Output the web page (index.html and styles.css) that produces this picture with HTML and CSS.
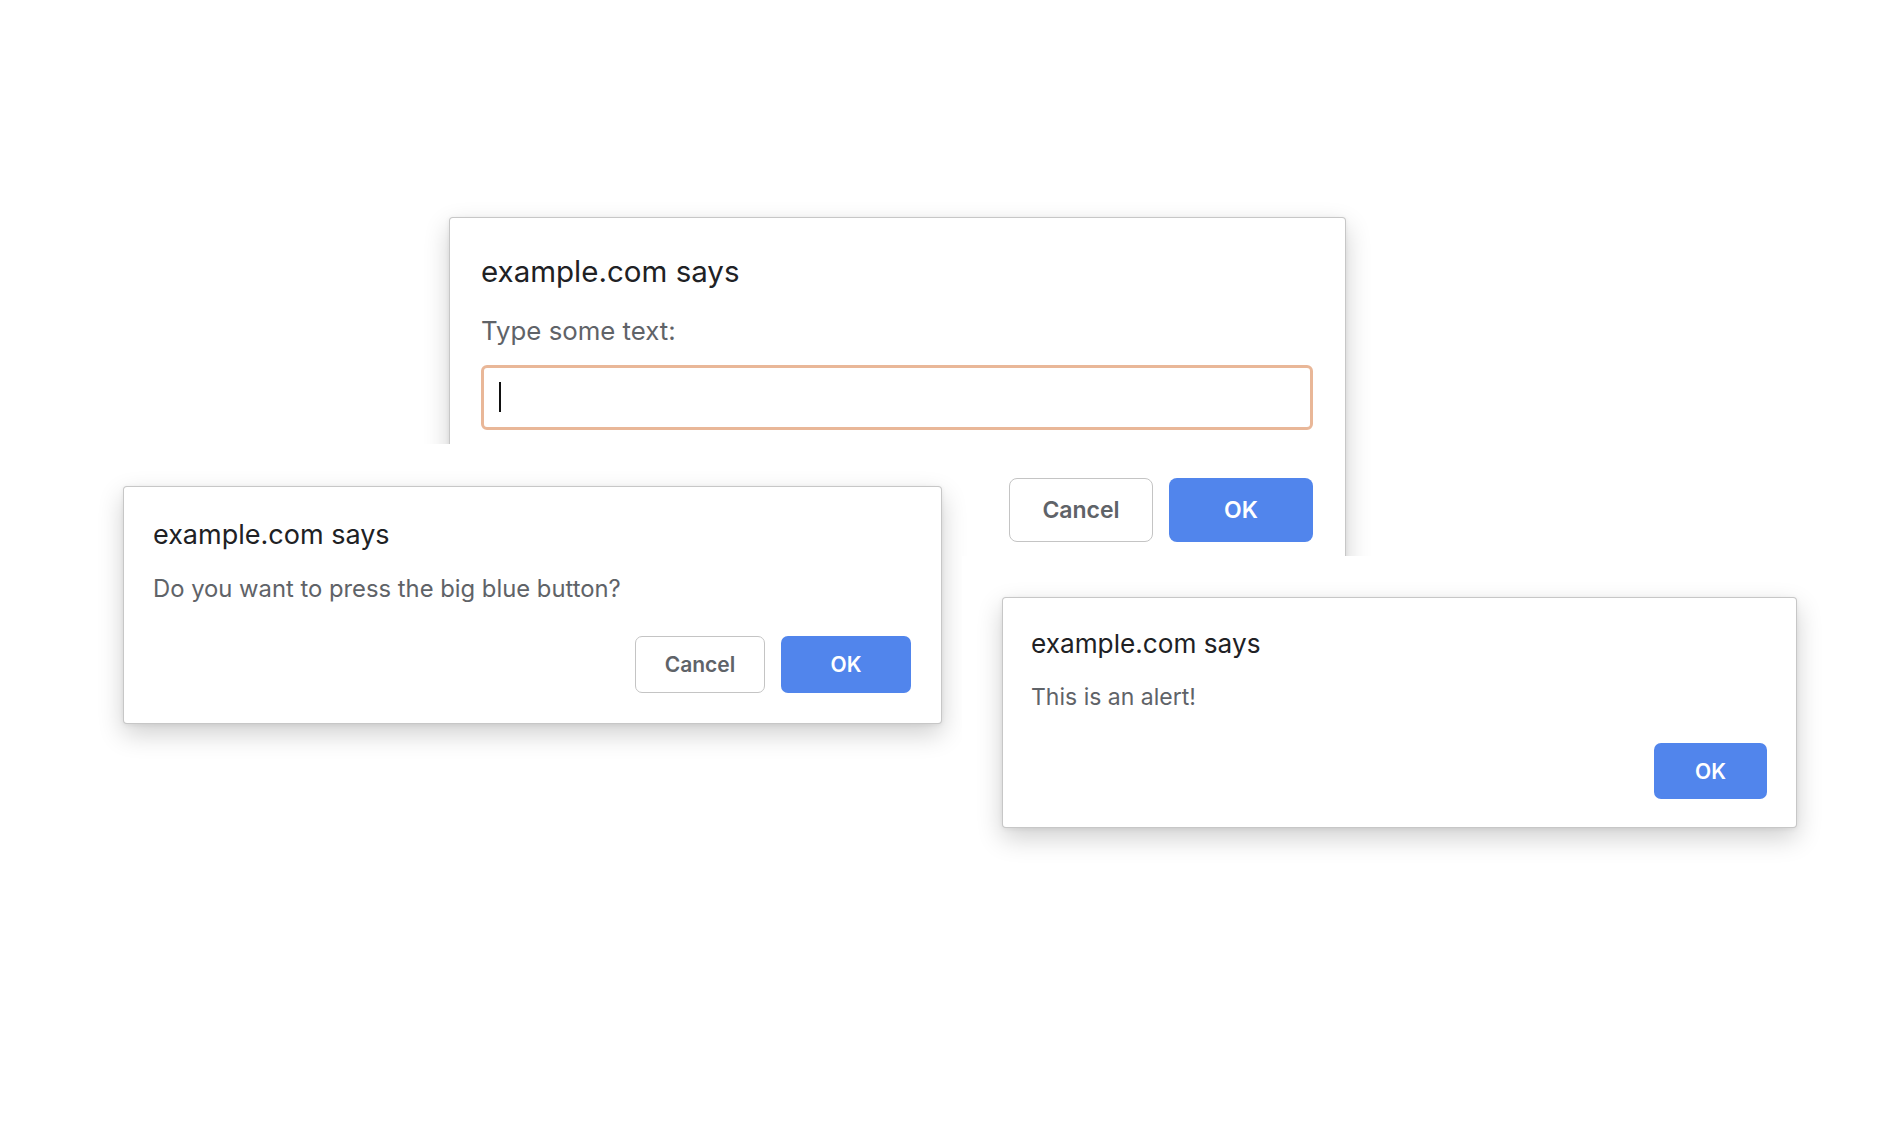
FILE: index.html
```html
<!DOCTYPE html>
<html lang="en">
<head>
<meta charset="utf-8">
<title>Dialogs</title>
<link rel="stylesheet" href="styles.css">
</head>
<body>
<div class="canvas">
  <div class="shot shot-prompt">
    <div class="dialog dialog-prompt">
      <div class="title">example.com says</div>
      <div class="message">Type some text:</div>
      <div class="field"><span class="caret"></span></div>
      <div class="actions">
        <button class="btn btn-cancel">Cancel</button>
        <button class="btn btn-ok">OK</button>
      </div>
    </div>
  </div>

  <div class="shot shot-confirm">
    <div class="dialog dialog-confirm">
      <div class="title">example.com says</div>
      <div class="message">Do you want to press the big blue button?</div>
      <div class="actions">
        <button class="btn btn-cancel">Cancel</button>
        <button class="btn btn-ok">OK</button>
      </div>
    </div>
  </div>

  <div class="shot shot-alert">
    <div class="dialog dialog-alert">
      <div class="title">example.com says</div>
      <div class="message">This is an alert!</div>
      <div class="actions">
        <button class="btn btn-ok">OK</button>
      </div>
    </div>
  </div>
</div>
</body>
</html>
```

FILE: styles.css
```css
html, body {
  margin: 0;
  padding: 0;
  background: #ffffff;
}

body {
  font-family: "Inter", "Liberation Sans", "DejaVu Sans", sans-serif;
}

.canvas {
  position: relative;
  width: 1884px;
  height: 1122px;
  overflow: hidden;
  background: #ffffff;
}

/* each "screenshot" is an opaque white tile holding one dialog */
.shot {
  position: absolute;
  background: #ffffff;
  padding: 42px;
  overflow: hidden;
}

.shot-prompt {
  left: 407px;
  top: 175px;
  z-index: 1;
}

.shot-confirm {
  left: 81px;
  top: 444px;
  z-index: 2;
}

.shot-alert {
  left: 962px;
  top: 556px;
  padding: 41px 40px 36px 40px;
  z-index: 3;
}

.dialog {
  box-sizing: border-box;
  display: flex;
  flex-direction: column;
  background: #ffffff;
  border: 1px solid rgba(0, 0, 0, 0.22);
  border-radius: 4px;
  box-shadow: 0 10px 26px rgba(0, 0, 0, 0.19), 0 1px 5px rgba(0, 0, 0, 0.07);
}

.title {
  color: #202124;
  white-space: nowrap;
}

.message {
  color: #5f6368;
  white-space: nowrap;
}

.actions {
  display: flex;
  justify-content: flex-end;
  gap: 16px;
}

.btn {
  box-sizing: border-box;
  display: flex;
  align-items: center;
  justify-content: center;
  font-family: "Inter", "Liberation Sans", sans-serif;
  font-weight: 600;
  padding: 0;
  cursor: default;
}

.btn-cancel {
  background: #ffffff;
  color: #5f6368;
  border: 1px solid #c4c4c4;
}

.btn-ok {
  background: #5185ec;
  color: #ffffff;
  border: none;
}

/* ---------- prompt (largest scale) ---------- */
.dialog-prompt {
  width: 897px;
  padding: 35px 32px 30px 31px;
}

.dialog-prompt .title {
  font-size: 29.5px;
  line-height: 36px;
}

.dialog-prompt .message {
  font-size: 25.8px;
  line-height: 32px;
  margin-top: 26px;
}

.field {
  box-sizing: border-box;
  height: 65px;
  margin-top: 18px;
  border: 3px solid #e9b798;
  border-radius: 6px;
  padding: 14px 0 0 15px;
  display: flex;
  align-items: flex-start;
}

.caret {
  display: block;
  width: 2px;
  height: 30px;
  background: #111111;
}

.dialog-prompt .actions {
  margin-top: 48px;
}

.dialog-prompt .btn {
  width: 144px;
  height: 64px;
  border-radius: 8px;
  font-size: 23px;
}

/* ---------- confirm ---------- */
.dialog-confirm {
  width: 819px;
  height: 238px;
  padding: 31px 30px 30px 29px;
}

.dialog-confirm .title {
  font-size: 27px;
  line-height: 33px;
}

.dialog-confirm .message {
  font-size: 23.8px;
  line-height: 29px;
  margin-top: 23px;
}

.dialog-confirm .actions {
  margin-top: 33px;
}

.dialog-confirm .btn {
  width: 130px;
  height: 57px;
  border-radius: 7px;
  font-size: 21px;
}

/* ---------- alert ---------- */
.dialog-alert {
  width: 795px;
  height: 231px;
  padding: 30px 29px 29px 28px;
}

.dialog-alert .title {
  font-size: 26.2px;
  line-height: 32px;
}

.dialog-alert .message {
  font-size: 23px;
  line-height: 28px;
  margin-top: 23px;
}

.dialog-alert .actions {
  margin-top: 32px;
}

.dialog-alert .btn {
  width: 113px;
  height: 56px;
  border-radius: 7px;
  font-size: 21px;
}
```
